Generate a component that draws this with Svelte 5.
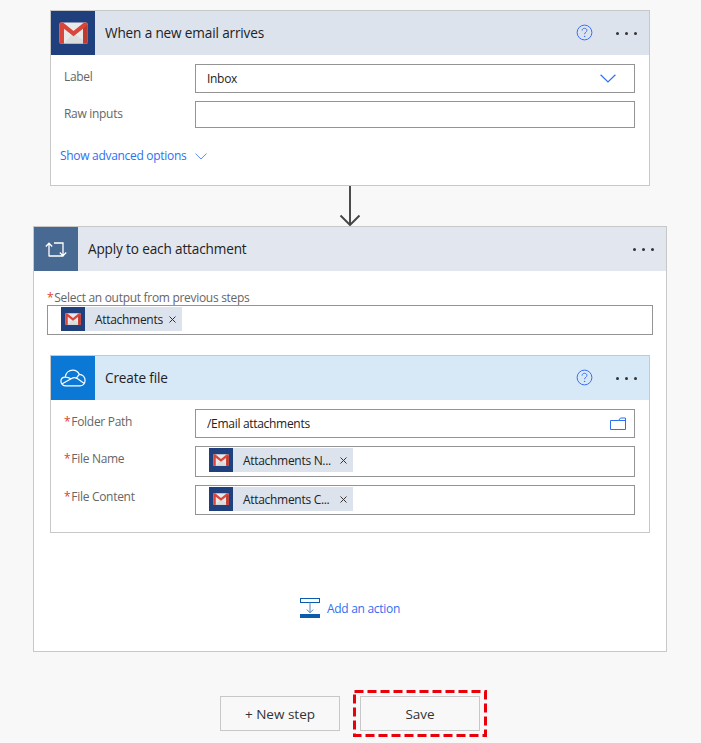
<script>
  const addLabel = 'Add an action';
</script>

{#snippet gmail(size)}
  <svg class="gmail" width={size} height={size * 0.76} viewBox="0 0 29 22" aria-hidden="true">
    <rect x="0.5" y="0.5" width="28" height="21" rx="1.5" fill="#e9e9e9" />
    <path d="M5 21.5 L14.5 11 L28.5 21.5 H6 Z" fill="#dcdcdc" />
    <path d="M0.5 2 Q0.5 0.5 2 0.5 H4 L14.5 9 L25 0.5 H27 Q28.5 0.5 28.5 2 V21.5 H24 V6.8 L14.5 14.2 L5 6.8 V21.5 H0.5 Z" fill="#d9453a" />
    <path d="M24 21.5 V6.8 L28.5 2.5 V21.5 Z" fill="#bf3b32" />
  </svg>
{/snippet}

{#snippet token(text)}
  <span class="token">
    <span class="token-icon">{@render gmail(16)}</span>
    <span class="token-text">{text}</span>
    <svg class="token-x" width="7" height="7" viewBox="0 0 7 7" aria-hidden="true"><path d="M0.5 0.5 L6.5 6.5 M6.5 0.5 L0.5 6.5" stroke="#333" stroke-width="1" fill="none" /></svg>
  </span>
{/snippet}

{#snippet helpDots()}
  <svg class="help" width="17" height="17" viewBox="0 0 17 17" aria-hidden="true">
    <circle cx="8.5" cy="8.5" r="7.4" fill="none" stroke="#3b6ff5" stroke-width="1" />
    <path d="M6.1 6.6 C6.1 5.1 7.2 4.3 8.5 4.3 C9.9 4.3 10.9 5.2 10.9 6.4 C10.9 8.1 8.6 8.2 8.6 10.2" fill="none" stroke="#3b6ff5" stroke-width="1" />
    <circle cx="8.6" cy="12.4" r="0.7" fill="#3b6ff5" />
  </svg>
  <span class="dots"><i></i><i></i><i></i></span>
{/snippet}

<main class="page">
  <section class="card trigger">
    <header class="head head-gmail">
      <div class="head-icon icon-gmail">{@render gmail(29)}</div>
      <h2>When a new email arrives</h2>
      {@render helpDots()}
    </header>
    <div class="fields">
      <div class="row r1">
        <span class="lab">Label</span>
        <div class="input">
          <span class="val">Inbox</span>
          <svg class="chev" width="16" height="9" viewBox="0 0 16 9" aria-hidden="true"><path d="M0.6 0.8 L8 8 L15.4 0.8" fill="none" stroke="#2f6ff0" stroke-width="1.2" /></svg>
        </div>
      </div>
      <div class="row r2">
        <span class="lab">Raw inputs</span>
        <div class="input"></div>
      </div>
      <div class="advanced">
        <span>Show advanced options</span>
        <svg width="12" height="7" viewBox="0 0 12 7" aria-hidden="true"><path d="M0.5 0.6 L6 6 L11.5 0.6" fill="none" stroke="#4b7ff5" stroke-width="0.9" /></svg>
      </div>
    </div>
  </section>

  <svg class="connector" width="22" height="40" viewBox="0 0 22 40" aria-hidden="true">
    <path d="M11 0 V39 M1.5 29.5 L11 39 L20.5 29.5" fill="none" stroke="#444" stroke-width="1.9" />
  </svg>

  <section class="card loop">
    <header class="head head-loop">
      <div class="head-icon icon-loop">
        <svg width="22" height="15" viewBox="0 0 22 15" aria-hidden="true">
          <path d="M4 14.5 V1.5 M0.8 4.5 L4 1.2 L7.2 4.5 M4 14 H18 V1 H9 M14.8 10.5 L18 13.8 L21.2 10.5" fill="none" stroke="#fff" stroke-width="1.3" />
        </svg>
      </div>
      <h2>Apply to each attachment</h2>
      <span class="dots"><i></i><i></i><i></i></span>
    </header>
    <div class="loop-body">
      <div class="out-label"><b>*</b>Select an output from previous steps</div>
      <div class="input out-input">{@render token('Attachments')}</div>

      <section class="card inner">
        <header class="head head-od">
          <div class="head-icon icon-od">
            <svg width="26" height="18" viewBox="0 0 28 19" aria-hidden="true">
              <path d="M6.5 18 C3 18 1 15.7 1 13 C1 10.4 3 8.6 5.5 8.5 C6.3 4 9.8 1 13.8 1 C16.9 1 19.5 2.8 20.8 5.6 C24.4 5.6 27 8.6 27 12 C27 15.4 24.6 18 21.4 18 Z M2.4 15.8 L12.5 10 C14.5 8.8 16.4 8.8 18.2 9.9 L25.8 15.2 M5.5 8.5 C8 8.4 10 9.2 11.8 10.4 M20.8 5.6 C19.6 6.8 18.6 8.2 17.8 9.6" fill="none" stroke="#fff" stroke-width="1.3" />
            </svg>
          </div>
          <h2>Create file</h2>
          {@render helpDots()}
        </header>
        <div class="fields inner-fields">
          <div class="row r3">
            <span class="lab"><b>*</b>Folder Path</span>
            <div class="input">
              <span class="val">/Email attachments</span>
              <svg class="folder" width="16" height="13" viewBox="0 0 16 13" aria-hidden="true"><path d="M0.5 3.5 H8.5 L10.5 1 H15.5 V12.5 H0.5 Z M8.5 3.5 H15.5" fill="none" stroke="#2f6ff0" stroke-width="1" /></svg>
            </div>
          </div>
          <div class="row r4">
            <span class="lab"><b>*</b>File Name</span>
            <div class="input tok-input">{@render token('Attachments N...')}</div>
          </div>
          <div class="row r5">
            <span class="lab"><b>*</b>File Content</span>
            <div class="input tok-input">{@render token('Attachments C...')}</div>
          </div>
        </div>
      </section>

      <div class="add">
        <svg width="20" height="20" viewBox="0 0 20 20" aria-hidden="true">
          <rect x="0.5" y="0.5" width="19" height="4" fill="none" stroke="#0b5cad" />
          <path d="M10 4.5 V14.5 M6.8 11.5 L10 14.8 L13.2 11.5" fill="none" stroke="#4c88c4" stroke-width="1" />
          <rect x="0" y="16" width="20" height="4" fill="#0b5cad" />
        </svg>
        <span>{addLabel}</span>
      </div>
    </div>
  </section>

  <div class="actions">
    <button type="button">+ New step</button>
    <div class="save-wrap">
      <button type="button">Save</button>
      <svg class="mark" width="134" height="47" viewBox="0 0 134 47" aria-hidden="true">
        <rect x="1.5" y="1.5" width="131" height="44" fill="none" stroke="#e8000b" stroke-width="3" stroke-dasharray="9 4" />
      </svg>
    </div>
  </div>
</main>

<style>
  :global(body) {
    margin: 0;
    background: #f8f8f8;
    font-family: "Open Sans", "Noto Sans", sans-serif;
    color: #222;
  }
  .page {
    width: 701px;
    height: 743px;
    box-sizing: border-box;
    padding-top: 10px;
    display: flex;
    flex-direction: column;
    align-items: center;
    overflow: hidden;
  }
  .card {
    box-sizing: border-box;
    border: 1px solid #c8c8c8;
    background: #fff;
  }
  .trigger {
    width: 600px;
    height: 176px;
    margin-left: -1px;
    flex: none;
  }
  .loop {
    width: 634px;
    height: 426px;
    margin-left: -1px;
    flex: none;
  }
  .inner {
    width: 600px;
    height: 178px;
    margin-left: 3px;
    margin-top: 20px;
  }
  .head {
    height: 44px;
    display: flex;
    align-items: center;
  }
  .head-gmail { background: #dde3ed; }
  .head-loop { background: #e2e6ee; }
  .head-od { background: #d7e8f7; }
  .head-icon {
    width: 44px;
    height: 44px;
    display: flex;
    align-items: center;
    justify-content: center;
    flex: none;
  }
  .icon-gmail { background: #20407d; }
  .icon-loop { background: #486991; }
  .icon-od { background: #0a78d4; }
  h2 {
    margin: 0 0 2px 10px;
    font-size: 13.6px;
    letter-spacing: -0.15px;
    font-weight: 400;
    color: #222;
    flex: 1;
  }
  .help { margin-right: 23px; margin-top: -1px; flex: none; }
  .dots {
    display: flex;
    gap: 6px;
    margin-right: 12px;
    flex: none;
  }
  .dots i {
    display: block;
    width: 3px;
    height: 3px;
    border-radius: 50%;
    background: #333;
  }
  .fields { padding: 9px 14px 0 13px; }
  .row {
    display: flex;
    align-items: flex-start;
  }
  .lab {
    width: 131px;
    flex: none;
    font-size: 12px;
    letter-spacing: -0.3px;
    color: #666;
    line-height: 16px;
    padding-top: 5px;
  }
  .lab b, .out-label b {
    color: #e03c31;
    font-weight: 400;
    margin-right: 1px;
  }
  .input {
    box-sizing: border-box;
    flex: 1;
    border: 1px solid #949494;
    background: #fff;
    display: flex;
    align-items: center;
    justify-content: space-between;
    padding: 0 18px 0 11px;
    height: 29px;
  }
  .val { font-size: 12px; letter-spacing: -0.3px; color: #222; }
  .r1 { height: 37px; }
  .r2 { height: 46px; }
  .r2 .input { height: 27px; }
  .advanced {
    display: flex;
    align-items: center;
    gap: 9px;
    margin-left: -4px;
    font-size: 12px;
    letter-spacing: -0.3px;
    color: #2f6ff0;
    line-height: 18px;
  }
  .connector {
    flex: none;
    height: 40px;
    margin-left: -1px;
    display: block;
  }
  .loop-body {
    padding: 20px 13px 0 13px;
    display: flex;
    flex-direction: column;
  }
  .out-label {
    font-size: 12px;
    letter-spacing: -0.3px;
    color: #666;
    line-height: 14px;
    height: 14px;
  }
  .out-input, .tok-input {
    flex: none;
    justify-content: flex-start;
    align-items: flex-start;
    padding: 1px 0 0 13px;
  }
  .out-input { height: 30px; }
  .tok-input { flex: 1; }
  .token {
    display: inline-flex;
    align-items: center;
    height: 24px;
    background: #dde3ed;
    padding-right: 6px;
  }
  .token-icon {
    width: 24px;
    height: 24px;
    background: #20407d;
    display: flex;
    align-items: center;
    justify-content: center;
    flex: none;
  }
  .token-text {
    font-size: 12px;
    letter-spacing: -0.3px;
    color: #222;
    margin: 0 6px 0 10px;
    white-space: nowrap;
  }
  .tok-input .token-text { width: 90px; margin-right: 7px; }
  .token-x { flex: none; }
  .inner-fields { padding-top: 9px; }
  .r3 { height: 37px; }
  .r4 { height: 39px; }
  .r5 { height: 30px; }
  .r5 .lab { padding-top: 4px; }
  .r4 .input { height: 31px; }
  .r5 .input { height: 30px; }
  .add {
    margin-top: 65px;
    display: flex;
    align-items: center;
    justify-content: center;
    gap: 7px;
    font-size: 12px;
    letter-spacing: -0.3px;
    color: #2f6ff0;
  }
  .actions {
    display: flex;
    gap: 20px;
    margin-top: 44px;
    margin-left: -1px;
    flex: none;
  }
  button {
    box-sizing: border-box;
    width: 120px;
    height: 35px;
    border: 1px solid #c8c8c8;
    background: #f8f8f8;
    font: inherit;
    font-size: 13.5px;
    color: #333;
    padding: 0;
  }
  .save-wrap { position: relative; }
  .mark {
    position: absolute;
    left: -7px;
    top: -6px;
    pointer-events: none;
  }
  .folder { margin-right: -10px; }
</style>
